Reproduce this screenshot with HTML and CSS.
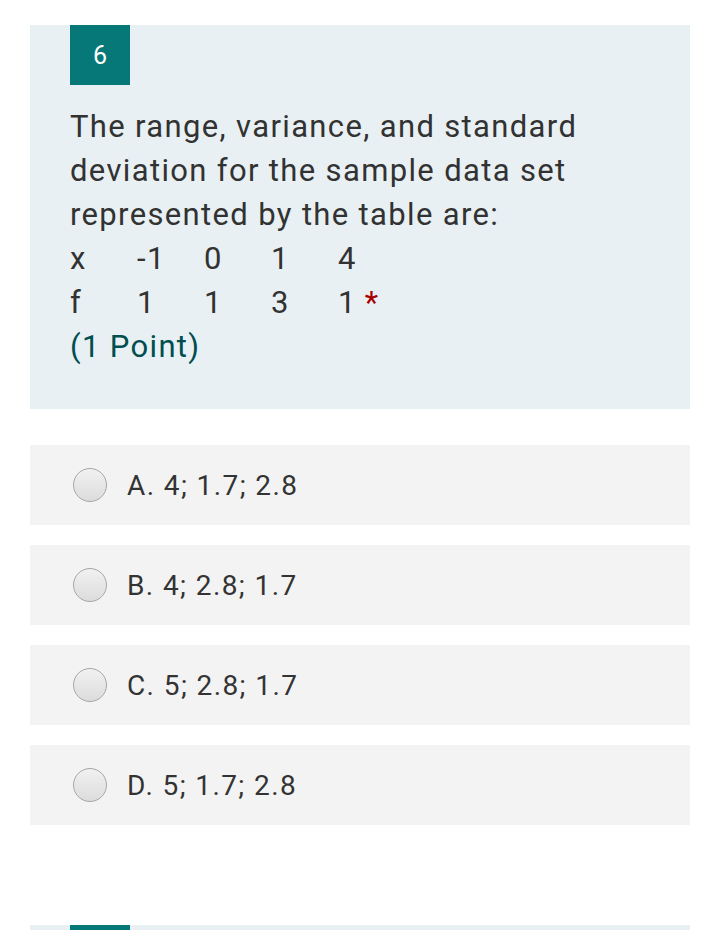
FILE: index.html
```html
<!DOCTYPE html>
<html>
<head>
<meta charset="utf-8">
<link rel="stylesheet" href="styles.css">
</head>
<body>
<div class="page">
  <div class="question">
    <div class="badge">6</div>
    <div class="qtext">
      <div>The range, variance, and standard deviation for the sample data set represented by the table are:</div>
      <div class="row"><span class="cell">x</span><span class="cell">-1</span><span class="cell">0</span><span class="cell">1</span><span class="cell">4</span></div>
      <div class="row"><span class="cell">f</span><span class="cell">1</span><span class="cell">1</span><span class="cell">3</span><span class="cell last">1</span><span class="req">*</span></div>
      <div class="points">(1 Point)</div>
    </div>
  </div>
  <div class="options">
    <div class="option"><span class="radio"></span><span class="label">A. 4; 1.7; 2.8</span></div>
    <div class="option"><span class="radio"></span><span class="label">B. 4; 2.8; 1.7</span></div>
    <div class="option"><span class="radio"></span><span class="label">C. 5; 2.8; 1.7</span></div>
    <div class="option"><span class="radio"></span><span class="label">D. 5; 1.7; 2.8</span></div>
  </div>
  <div class="question next">
    <div class="badge small"></div>
  </div>
</div>
</body>
</html>
```

FILE: styles.css
```css
html, body {
  margin: 0;
  padding: 0;
  background: #ffffff;
}
body {
  font-family: Roboto, "Liberation Sans", sans-serif;
  color: #333333;
  height: 930px;
  overflow: hidden;
}
.page {
  padding: 25px 30px 0 30px;
  width: 660px;
}
.question {
  background: #e8f0f3;
  padding: 0 40px 40px 40px;
}
.badge {
  width: 60px;
  height: 60px;
  background: #077878;
  color: #ffffff;
  font-size: 25px;
  display: flex;
  align-items: center;
  justify-content: center;
}
.qtext {
  margin-top: 20px;
  font-size: 31px;
  letter-spacing: 1.35px;
  line-height: 44px;
  color: #323232;
}
.row {
  display: flex;
  align-items: baseline;
}
.cell {
  width: 67px;
}
.cell.last {
  width: auto;
  margin-right: 8px;
}
.req {
  color: #a80000;
}
.points {
  color: #004e4f;
}
.options {
  display: flex;
  flex-direction: column;
  gap: 20px;
  margin-top: 36px;
}
.option {
  height: 80px;
  background: #f3f3f3;
  display: flex;
  align-items: center;
  padding-left: 43px;
}
.radio {
  width: 32px;
  height: 32px;
  border-radius: 50%;
  border: 1px solid #a6a6a6;
  background: linear-gradient(#f1f1f1, #dcdcdc);
  flex: none;
}
.label {
  margin-left: 20px;
  font-size: 28px;
  letter-spacing: 1.4px;
  color: #333333;
}
.question.next {
  margin-top: 100px;
  padding-bottom: 0;
}
.badge.small {
  height: 60px;
}
```
